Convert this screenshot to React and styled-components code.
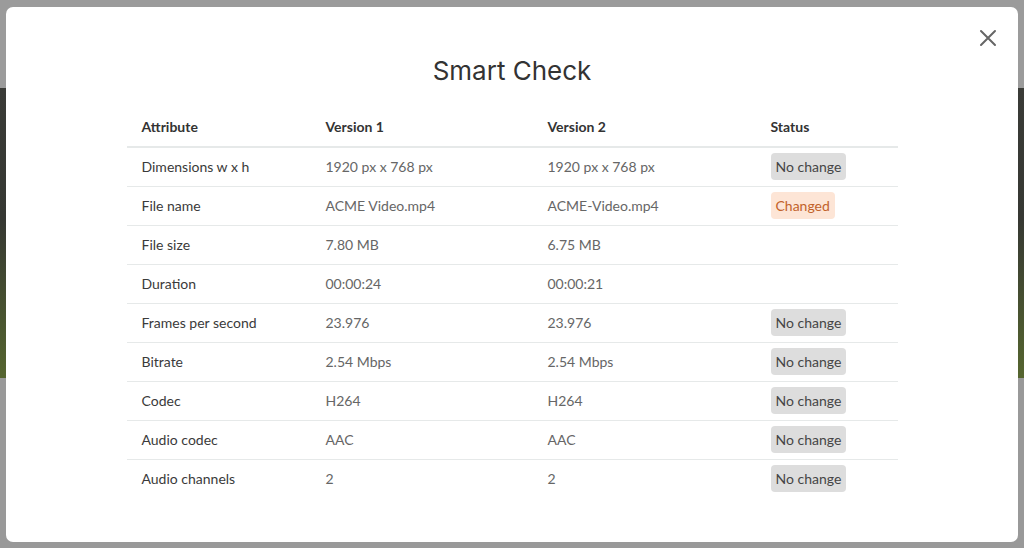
import React from "react";
import styled, { createGlobalStyle } from "styled-components";

const Global = createGlobalStyle`
  html, body { margin: 0; padding: 0; }
  body { width: 1024px; height: 548px; overflow: hidden; background: #9a9a9a; font-family: Lato, "Liberation Sans", sans-serif; }
  #root { height: 548px; }
`;

const Page = styled.div`
  height: 548px;
  display: flex;
  flex-direction: column;
  background: #9a9a9a;
`;

const PageHeader = styled.div`
  height: 88px;
  background: #9b9b9b;
`;

const HeroBand = styled.div`
  height: 290px;
  background: linear-gradient(180deg, #3a3b37 0%, #363833 45%, #4a5530 80%, #55652f 100%);
`;

const PageRest = styled.div`
  flex: 1;
  background: #999999;
`;

const Modal = styled.div`
  position: fixed;
  left: 6px;
  top: 7px;
  width: 1012px;
  height: 535px;
  background: #ffffff;
  border-radius: 7px;
  box-sizing: border-box;
  display: flex;
  flex-direction: column;
  align-items: center;
  padding-top: 48px;
`;

const CloseButton = styled.button`
  position: absolute;
  top: 21px;
  right: 20px;
  width: 20px;
  height: 20px;
  padding: 0;
  border: none;
  background: transparent;
  display: flex;
  align-items: center;
  justify-content: center;
  cursor: pointer;
`;

const Title = styled.h1`
  margin: 0;
  font-family: Inter, "Liberation Sans", sans-serif;
  font-weight: 400;
  font-size: 26px;
  line-height: 32px;
  color: #333333;
`;

const Table = styled.table`
  margin-top: 19px;
  width: 771px;
  border-collapse: collapse;
  table-layout: fixed;
  font-size: 14px;
`;

const Th = styled.th`
  text-align: left;
  font-weight: 700;
  color: #333333;
  padding: 0 15px;
  height: 40px;
  border-bottom: 2px solid #e6e9e9;
`;

const Row = styled.tr`
  & + & td { border-top: 1px solid #e6e9e9; }
`;

const Td = styled.td`
  padding: 5px 15px 6px;
  height: 27px;
  vertical-align: middle;
  color: ${(p) => (p.$label ? "#3a3a3a" : "#666666")};
  white-space: nowrap;
`;

const Badge = styled.span`
  display: inline-flex;
  align-items: center;
  height: 27px;
  padding: 0 5px;
  border-radius: 4px;
  font-size: 14px;
  vertical-align: middle;
  background: ${(p) => (p.$changed ? "#fde5d6" : "#dddddd")};
  color: ${(p) => (p.$changed ? "#c2622b" : "#454545")};
`;

const rows = [
  ["Dimensions w x h", "1920 px x 768 px", "1920 px x 768 px", "same"],
  ["File name", "ACME Video.mp4", "ACME-Video.mp4", "changed"],
  ["File size", "7.80 MB", "6.75 MB", null],
  ["Duration", "00:00:24", "00:00:21", null],
  ["Frames per second", "23.976", "23.976", "same"],
  ["Bitrate", "2.54 Mbps", "2.54 Mbps", "same"],
  ["Codec", "H264", "H264", "same"],
  ["Audio codec", "AAC", "AAC", "same"],
  ["Audio channels", "2", "2", "same"],
];

export default function App() {
  return (
    <>
      <Global />
      <Page>
        <PageHeader />
        <HeroBand />
        <PageRest />
      </Page>
      <Modal>
        <CloseButton aria-label="Close">
          <svg width="18" height="18" viewBox="0 0 18 18">
            <path d="M2 2 L16 16 M16 2 L2 16" stroke="#666" strokeWidth="2" strokeLinecap="round" />
          </svg>
        </CloseButton>
        <Title>Smart Check</Title>
        <Table>
          <colgroup>
            <col style={{ width: 184 }} />
            <col style={{ width: 222 }} />
            <col style={{ width: 223 }} />
            <col style={{ width: 142 }} />
          </colgroup>
          <thead>
            <tr>
              <Th>Attribute</Th>
              <Th>Version 1</Th>
              <Th>Version 2</Th>
              <Th>Status</Th>
            </tr>
          </thead>
          <tbody>
            {rows.map(([label, v1, v2, status]) => (
              <Row key={label}>
                <Td $label>{label}</Td>
                <Td>{v1}</Td>
                <Td>{v2}</Td>
                <Td>
                  {status === "same" && <Badge>No change</Badge>}
                  {status === "changed" && <Badge $changed>Changed</Badge>}
                </Td>
              </Row>
            ))}
          </tbody>
        </Table>
      </Modal>
    </>
  );
}
